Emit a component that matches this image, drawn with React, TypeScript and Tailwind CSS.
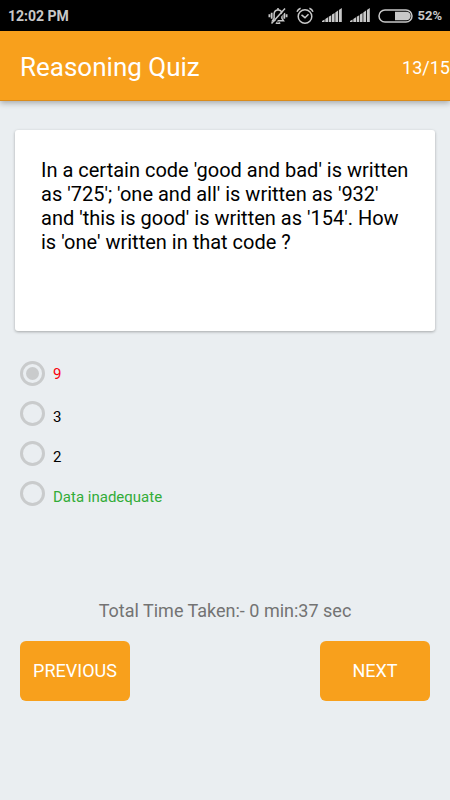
import React, { useState } from 'react';

interface Option {
  id: string;
  text: string;
  color: string;
  align: string;
}

const options: Option[] = [
  { id: 'a', text: '9', color: 'text-[#f8000c]', align: 'items-center' },
  { id: 'b', text: '3', color: 'text-black', align: 'items-end' },
  { id: 'c', text: '2', color: 'text-black', align: 'items-end' },
  { id: 'd', text: 'Data inadequate', color: 'text-[#32ac38]', align: 'items-end' },
];

const VibrateIcon = () => (
  <svg width="20" height="18" viewBox="0 0 20 18" fill="none" stroke="#c8c8c8" strokeWidth="1.5">
    <path d="M4.5 13.7h11l-1.6-2.4V7.2c0-2.6-1.5-4.2-3.9-4.2S6.1 4.6 6.1 7.2v4.1z" />
    <path d="M7.8 15.6c1 1 3.4 1 4.4 0M10 1v2" />
    <path d="M3.7 5.8v6M1.4 7.3v3M16.3 5.8v6M18.6 7.3v3" strokeWidth="1.8" />
    <path d="M18.5 2.5 5 17.5" stroke="#000" />
    <path d="M17 1.5 3.5 16.5" />
  </svg>
);

const AlarmIcon = () => (
  <svg width="18" height="18" viewBox="0 0 18 18" fill="none" stroke="#c8c8c8" strokeWidth="1.5">
    <circle cx="9" cy="9.5" r="6.8" />
    <path d="M5.5 7.8 9 10.7l3.5-3.4M1 4.8c.6-1.7 1.9-3 3.6-3.6M17 4.8c-.6-1.7-1.9-3-3.6-3.6" />
  </svg>
);

const SignalIcon = () => (
  <svg width="20" height="15" viewBox="0 0 20 15" fill="#c8c8c8">
    <path d="M0 14v-1l2.6-1.5V14zM3.3 14v-3L6 9.2V14zM6.7 14V8.8l2.6-1.6V14zM10 14V6.6l2.6-1.7V14zM13.3 14V4.4L16 2.6V14zM16.9 14V2L19.8 0v14z" />
  </svg>
);

const BatteryIcon = () => (
  <svg width="35" height="14" viewBox="0 0 35 14" fill="none">
    <rect x="1" y="1" width="33" height="12" rx="6" stroke="#c8c8c8" strokeWidth="1.5" />
    <path d="M17 2.8h11.5a4.2 4.2 0 0 1 0 8.4H17z" fill="#c8c8c8" />
  </svg>
);

const App: React.FC = () => {
  const [selected, setSelected] = useState('a');

  return (
    <div className="min-h-screen bg-[#eaeef1] font-[Roboto,sans-serif]">
      {/* Status bar */}
      <div className="flex h-[31px] items-center bg-black px-2 text-sm font-bold text-[#c8c8c8]">
        <span className="mr-auto">12:02 PM</span>
        <VibrateIcon />
        <div className="flex items-center pl-2">
          <AlarmIcon />
        </div>
        <div className="flex items-center gap-2 px-2">
          <SignalIcon />
          <SignalIcon />
        </div>
        <BatteryIcon />
        <span className="pl-1 text-[13px] leading-5">52%</span>
      </div>

      <header className="flex h-[70px] items-center justify-between border-b border-[#d98b1c] bg-[#f8a01c] pl-5 pt-1 text-white shadow-[0_2px_6px_rgba(0,0,0,0.3)]">
        <h1 className="text-[26px]">Reasoning Quiz</h1>
        <span className="text-lg">13/15</span>
      </header>

      <main className="px-[15px] pt-[29px]">
        <section className="min-h-[201px] rounded-[3px] bg-white px-[26px] pt-7 shadow-[0_1px_3px_rgba(0,0,0,0.3)]">
          <p className="text-xl leading-6 text-black">
            In a certain code 'good and bad' is written as '725'; 'one and all' is written as '932' and
            'this is good' is written as '154'. How is 'one' written in that code ?
          </p>
        </section>

        <div role="radiogroup" aria-label="Answers" className="mt-[30px] flex flex-col gap-[15px] px-[5px]">
          {options.map((option) => (
            <label key={option.id} className={`flex h-[25px] gap-2 ${option.align}`}>
              <input
                type="radio"
                name="answer"
                value={option.id}
                checked={selected === option.id}
                onChange={() => setSelected(option.id)}
                className="grid h-[25px] w-[25px] shrink-0 appearance-none place-items-center rounded-full border-3 border-[#c9cbcc] before:h-[13px] before:w-[13px] before:rounded-full checked:before:bg-[#c9cbcc]"
              />
              <span className={`text-[15px] leading-[18px] ${option.color}`}>{option.text}</span>
            </label>
          ))}
        </div>
      </main>

      <footer className="px-5 pt-[93px]">
        <p className="text-center text-lg leading-6 text-[#737373]">Total Time Taken:- 0 min:37 sec</p>
        <div className="mt-[18px] flex justify-between text-lg text-white">
          <button className="h-[60px] w-[110px] rounded-md bg-[#f8a01c]">PREVIOUS</button>
          <button className="h-[60px] w-[110px] rounded-md bg-[#f8a01c]">NEXT</button>
        </div>
      </footer>
    </div>
  );
};

export default App;
